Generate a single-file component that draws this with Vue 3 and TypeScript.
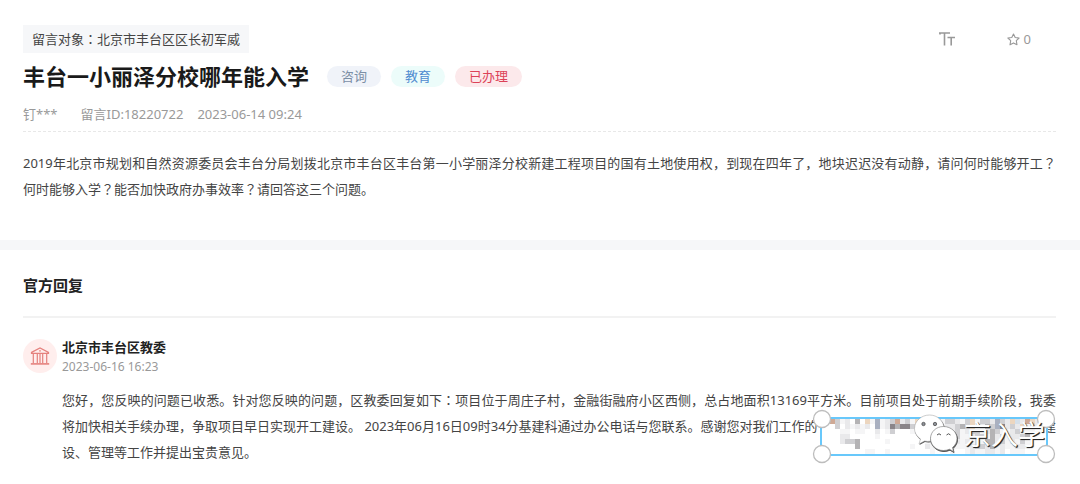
<script setup lang="ts">
interface Tag {
  label: string
  tone: 'plain' | 'mint' | 'rose'
}

const tags: Tag[] = [
  { label: '咨询', tone: 'plain' },
  { label: '教育', tone: 'mint' },
  { label: '已办理', tone: 'rose' },
]

const palette: Record<string, string> = {
  a: '#f5f5f6',
  b: '#e9e9eb',
  c: '#cfcfd2',
  d: '#b4b3b5',
  e: '#8a8589',
  p: '#ecd6bf',
  t: '#cfa995',
  u: '#a9b0c0',
  v: '#d5e0ea',
}

// One letter per 5px tile; a dot leaves the white backing visible.
const mosaic: string[] = [
  '..tcab.d.pauabctbcapabcbaccbacpaccbucbpvbtpb.',
  '...c.babab.uabedeecvabccabbcdcpabdcuebcbpacb.',
  '....aa.aa..b.ac...ab.bccaabcabccabdcaabcaaa..',
  '....bb.....a........b.abcabcaabccadbcabbcda..',
  '....bccd.....a.......abacaababacaddbcabaca...',
  '.......d..........a..bab.abaaabccbdabaabba...',
  '.........aa..a........a...a..abaabbab.aaa....',
]

const tiles = mosaic.flatMap((row, r) =>
  [...row].flatMap((key, c) =>
    key === '.' ? [] : [{ x: 8 + c * 5, y: 11 + r * 5, fill: palette[key] }],
  ),
)

const handles = [
  { x: 10, y: 11 },
  { x: 234, y: 11 },
  { x: 10, y: 46 },
  { x: 234, y: 46 },
]
</script>

<template>
  <main class="page">
    <article class="message">
      <header class="topbar">
        <p class="target">留言对象<span class="mid">：</span>北京市丰台区区长初军威</p>
        <div class="tools">
          <button class="tool" type="button" aria-label="字号">
            <svg width="16" height="14" viewBox="0 0 16 14" fill="none" stroke="#999" stroke-width="1.6">
              <path d="M0 1H11M5.500 1V13.500M1 0.500V2.500M8.500 5.500H16M12.200 5.500V13.500" />
            </svg>
          </button>
          <button class="tool" type="button" aria-label="收藏">
            <svg width="13" height="13" viewBox="0 0 13 13" fill="none" stroke="#999" stroke-width="1.1" stroke-linejoin="round">
              <path d="M6.500 1L8.200 4.500L12.100 5L9.300 7.700L10 11.800L6.500 9.900L3 11.800L3.700 7.700L0.900 5L4.800 4.500Z" />
            </svg>
            <span>0</span>
          </button>
        </div>
      </header>
      <div class="heading">
        <h1>丰台一小丽泽分校哪年能入学</h1>
        <span v-for="tag in tags" :key="tag.label" class="tag" :class="tag.tone">{{ tag.label }}</span>
      </div>
      <div class="meta">
        <span class="author">钉***</span>
        <span class="ident">留言ID:18220722</span>
        <time>2023-06-14 09:24</time>
      </div>
      <p class="text question">
        <span class="line full">2019年北京市规划和自然资源委员会丰台分局划拨北京市丰台区丰台第一小学丽泽分校新建工程项目的国有土地使用权，到现在四年了，地块迟迟没有动静，请问何时能够开工<span class="mid">？</span></span>
        <span class="line">何时能够入学<span class="mid">？</span>能否加快政府办事效率<span class="mid">？</span>请回答这三个问题。</span>
      </p>
    </article>

    <section class="replies">
      <h2>官方回复</h2>
      <div class="reply">
        <div class="avatar">
          <svg width="20" height="18" viewBox="0 0 20 18" fill="none" stroke="#e5817d" stroke-width="1.2">
            <path d="M1.500 5.400L10 0.900L18.500 5.400V6.400H1.500ZM3.300 6.400V16M7.300 6.400V16M10 6.400V16M12.700 6.400V16M16.700 6.400V16" />
            <path d="M0.800 16.900H19.200" stroke-width="1.600" />
            <circle cx="10" cy="3.900" r="0.800" fill="#e5817d" stroke="none" />
          </svg>
        </div>
        <div class="content">
          <h3>北京市丰台区教委</h3>
          <time>2023-06-16 16:23</time>
          <div class="text answer">
            <span class="line full">您好，您反映的问题已收悉。针对您反映的问题，区教委回复如下<span class="mid">：</span>项目位于周庄子村，金融街融府小区西侧，总占地面积13169平方米。目前项目处于前期手续阶段，我委</span>
            <span class="line split"><span>将加快相关手续办理，争取项目早日实现开工建设。 2023年06月16日09时34分基建科通过办公电话与您联系。感谢您对我们工作的</span><span>建</span></span>
            <span class="line">设、管理等工作并提出宝贵意见。</span>
            <svg class="patch" width="244" height="58" viewBox="0 -1 244 58">
              <rect x="9" y="10" width="226" height="37" fill="#fff" />
              <g shape-rendering="crispEdges">
                <rect v-for="(t, i) in tiles" :key="i" :x="t.x" :y="t.y" width="5" height="5" :fill="t.fill" />
              </g>
              <rect x="9" y="10" width="226" height="37" fill="none" stroke="#68c8fb" stroke-width="2" />
              <g fill="#fff" stroke="#bdbdbd" stroke-width="1.300">
                <circle v-for="(h, i) in handles" :key="i" :cx="h.x" :cy="h.y" r="8.500" />
              </g>
              <g stroke-linejoin="round">
                <path fill="#555" d="M118 8C110 8 103 14 103 21.500C103 26 105.500 29.500 109 32L107.500 37L113 34C121 36 133 30 133 21.500C133 14 126 8 118 8Z" />
                <path fill="#fff" stroke="#999" stroke-width="0.500" d="M117.500 7C109.500 7 102.500 13 102.500 20.500C102.500 25 105 28.500 108.500 31L107 36L112.500 33C120.500 35 132 29 132 20.500C132 13 125.500 7 117.500 7Z" />
                <path fill="#555" stroke="#555" d="M132 19.500C124.500 19.500 119 25 119 31.500C119 38 124.500 43.500 132 43.500C134 43.500 136 43 138 42.200L142 44.500L141 40.500C144 38 145.500 35 145.500 31.500C145.500 25 139.500 19.500 132 19.500Z" />
                <path fill="#fff" stroke="#777" stroke-width="0.600" d="M131.500 18.500C124 18.500 118.500 24 118.500 30.500C118.500 37 124 42.500 131.500 42.500C133.500 42.500 135.500 42 137.500 41.200L141.500 43.500L140.500 39.500C143.500 37 145 34 145 30.500C145 24 139 18.500 131.500 18.500Z" />
              </g>
              <g fill="#8d9299" stroke="#444" stroke-width="0.700">
                <circle cx="111.500" cy="16" r="1.700" />
                <circle cx="123" cy="16" r="1.700" />
              </g>
              <path d="M125 27Q127 24.500 129 27M134.500 27Q136.500 24.500 138.500 27" fill="none" stroke="#555" />
              <text class="mark" x="152" y="37">京入学</text>
            </svg>
          </div>
        </div>
      </div>
    </section>
  </main>
</template>

<style>
body {
  margin: 0;
  background: #fff;
}
</style>

<style scoped>
.page {
  font-family: 'Noto Sans', 'Noto Sans CJK SC', sans-serif;
  font-size: 13px;
  line-height: 26px;
  color: #444;
}

h1,
h2,
h3,
p {
  margin: 0;
}

.message {
  padding: 25px 24px 38px 23px;
  border-bottom: 10px solid #f6f7f9;
}

.topbar {
  display: flex;
  justify-content: space-between;
  align-items: center;
}

.target {
  padding: 0 9px;
  line-height: 28px;
  background: #f6f7f9;
}

.mid {
  font-family: 'Noto Sans CJK JP', sans-serif;
}

.tools {
  display: flex;
  gap: 52px;
  padding-right: 25px;
}

.tool {
  display: flex;
  align-items: center;
  gap: 4px;
  padding: 0;
  border: 0;
  background: none;
  font: inherit;
  color: #999;
}

.heading {
  display: flex;
  align-items: center;
  height: 46px;
}

h1 {
  margin-right: 18px;
  font-size: 22px;
  line-height: 32px;
  color: #1a1a1a;
}

.tag {
  margin-right: 10px;
  padding: 0 14px;
  border-radius: 11px;
  line-height: 21px;
}

.plain {
  background: #f0f3f9;
  color: #7c8fa6;
}

.mint {
  background: #ecfcfa;
  color: #4f8bd0;
}

.rose {
  background: #fce9eb;
  color: #dc4257;
}

.meta {
  display: flex;
  padding: 2px 0 4px;
  border-bottom: 1px dashed #e8e8e8;
  color: #999;
}

.author {
  margin-right: 23px;
}

.ident {
  margin-right: 14px;
}

.question {
  padding-top: 18px;
}

.line {
  display: block;
  white-space: nowrap;
}

.full {
  white-space: normal;
  text-align: justify;
  text-align-last: justify;
}

.split {
  display: flex;
  justify-content: space-between;
}

.replies {
  padding: 21px 24px 18px 23px;
}

h2 {
  padding-bottom: 17px;
  border-bottom: 2px solid #f2f2f2;
  font-size: 15px;
  line-height: 28px;
  color: #222;
}

.reply {
  display: flex;
  gap: 5px;
  padding-top: 21px;
}

.avatar {
  display: flex;
  flex: none;
  align-items: center;
  justify-content: center;
  width: 34px;
  height: 34px;
  border-radius: 50%;
  background: #ffeeed;
}

.content {
  flex: 1;
  min-width: 0;
}

h3 {
  font-size: 13px;
  line-height: 16px;
  color: #222;
}

.content time {
  display: block;
  font-size: 12px;
  line-height: 24px;
  color: #999;
}

.answer {
  position: relative;
  margin-top: 8px;
}

.patch {
  position: absolute;
  right: 0;
  bottom: 0;
}

.mark {
  font-size: 27px;
  fill: #fff;
  text-shadow: 1px 1px 1px #222, 1px 1px 0 #555;
}
</style>
